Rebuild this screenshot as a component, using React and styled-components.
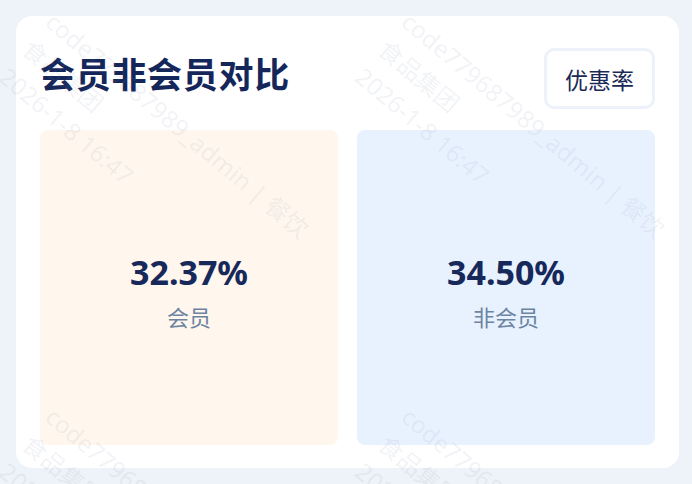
import React from "react";
import styled, { createGlobalStyle } from "styled-components";

const GlobalStyle = createGlobalStyle`
  * { box-sizing: border-box; }
  html, body { margin: 0; padding: 0; }
  body {
    background: #eef2f9;
    font-family: "Noto Sans", "Noto Sans CJK SC", sans-serif;
  }
`;

const Page = styled.div`
  width: 692px;
  height: 484px;
  padding: 16px 13px 16px 16px;
  position: relative;
  overflow: hidden;
`;

const Card = styled.section`
  background: #ffffff;
  border-radius: 16px;
  padding: 32px 24px 23px 24px;
`;

const Header = styled.header`
  display: flex;
  justify-content: space-between;
  align-items: flex-start;
`;

const Title = styled.h2`
  margin: 0;
  font-family: "Noto Sans CJK SC", sans-serif;
  font-size: 35px;
  font-weight: 700;
  letter-spacing: 0.7px;
  line-height: 50px;
  color: #15275a;
`;

const TagButton = styled.button`
  width: 111px;
  height: 61px;
  border: 3px solid #edf1f9;
  border-radius: 10px;
  background: #ffffff;
  color: #1b2a55;
  font-family: "Noto Sans CJK SC", sans-serif;
  font-size: 23px;
  display: flex;
  align-items: center;
  justify-content: center;
  padding: 0;
`;

const Grid = styled.div`
  margin-top: 21px;
  display: grid;
  grid-template-columns: 1fr 1fr;
  gap: 19px;
`;

const Panel = styled.div`
  height: 315px;
  border-radius: 8px;
  background: ${(p) => p.$bg};
  display: flex;
  flex-direction: column;
  align-items: center;
  justify-content: center;
  padding-top: 9px;
  gap: 10px;
`;

const Value = styled.div`
  font-family: "Noto Sans", sans-serif;
  font-size: 34px;
  font-weight: 700;
  line-height: 40px;
  color: #17285a;
`;

const Label = styled.div`
  font-size: 22px;
  line-height: 30px;
  color: #6c84a2;
`;

const Watermark = styled.div`
  position: absolute;
  inset: 0;
  pointer-events: none;
`;

const Tile = styled.div`
  position: absolute;
  left: ${(p) => p.$x}px;
  top: ${(p) => p.$y}px;
  transform: rotate(40deg);
  transform-origin: top left;
  white-space: nowrap;
  font-family: "Noto Sans", "Noto Sans CJK SC", sans-serif;
  font-size: 24px;
  line-height: 36px;
  color: rgba(120, 135, 160, 0.11);
`;

const tiles = [
  [61, 4],
  [417, 4],
  [61, 399],
  [417, 399],
];

export default function App() {
  return (
    <>
      <GlobalStyle />
      <Page>
        <Card>
          <Header>
            <Title>会员非会员对比</Title>
            <TagButton>优惠率</TagButton>
          </Header>
          <Grid>
            <Panel $bg="#fff6ee">
              <Value>32.37%</Value>
              <Label>会员</Label>
            </Panel>
            <Panel $bg="#e8f2ff">
              <Value>34.50%</Value>
              <Label>非会员</Label>
            </Panel>
          </Grid>
        </Card>
        <Watermark>
          {tiles.map(([x, y], i) => (
            <Tile key={i} $x={x} $y={y}>
              <div>code779687989_admin | 餐饮</div>
              <div>食品集团</div>
              <div>2026-1-8 16:47</div>
            </Tile>
          ))}
        </Watermark>
      </Page>
    </>
  );
}
